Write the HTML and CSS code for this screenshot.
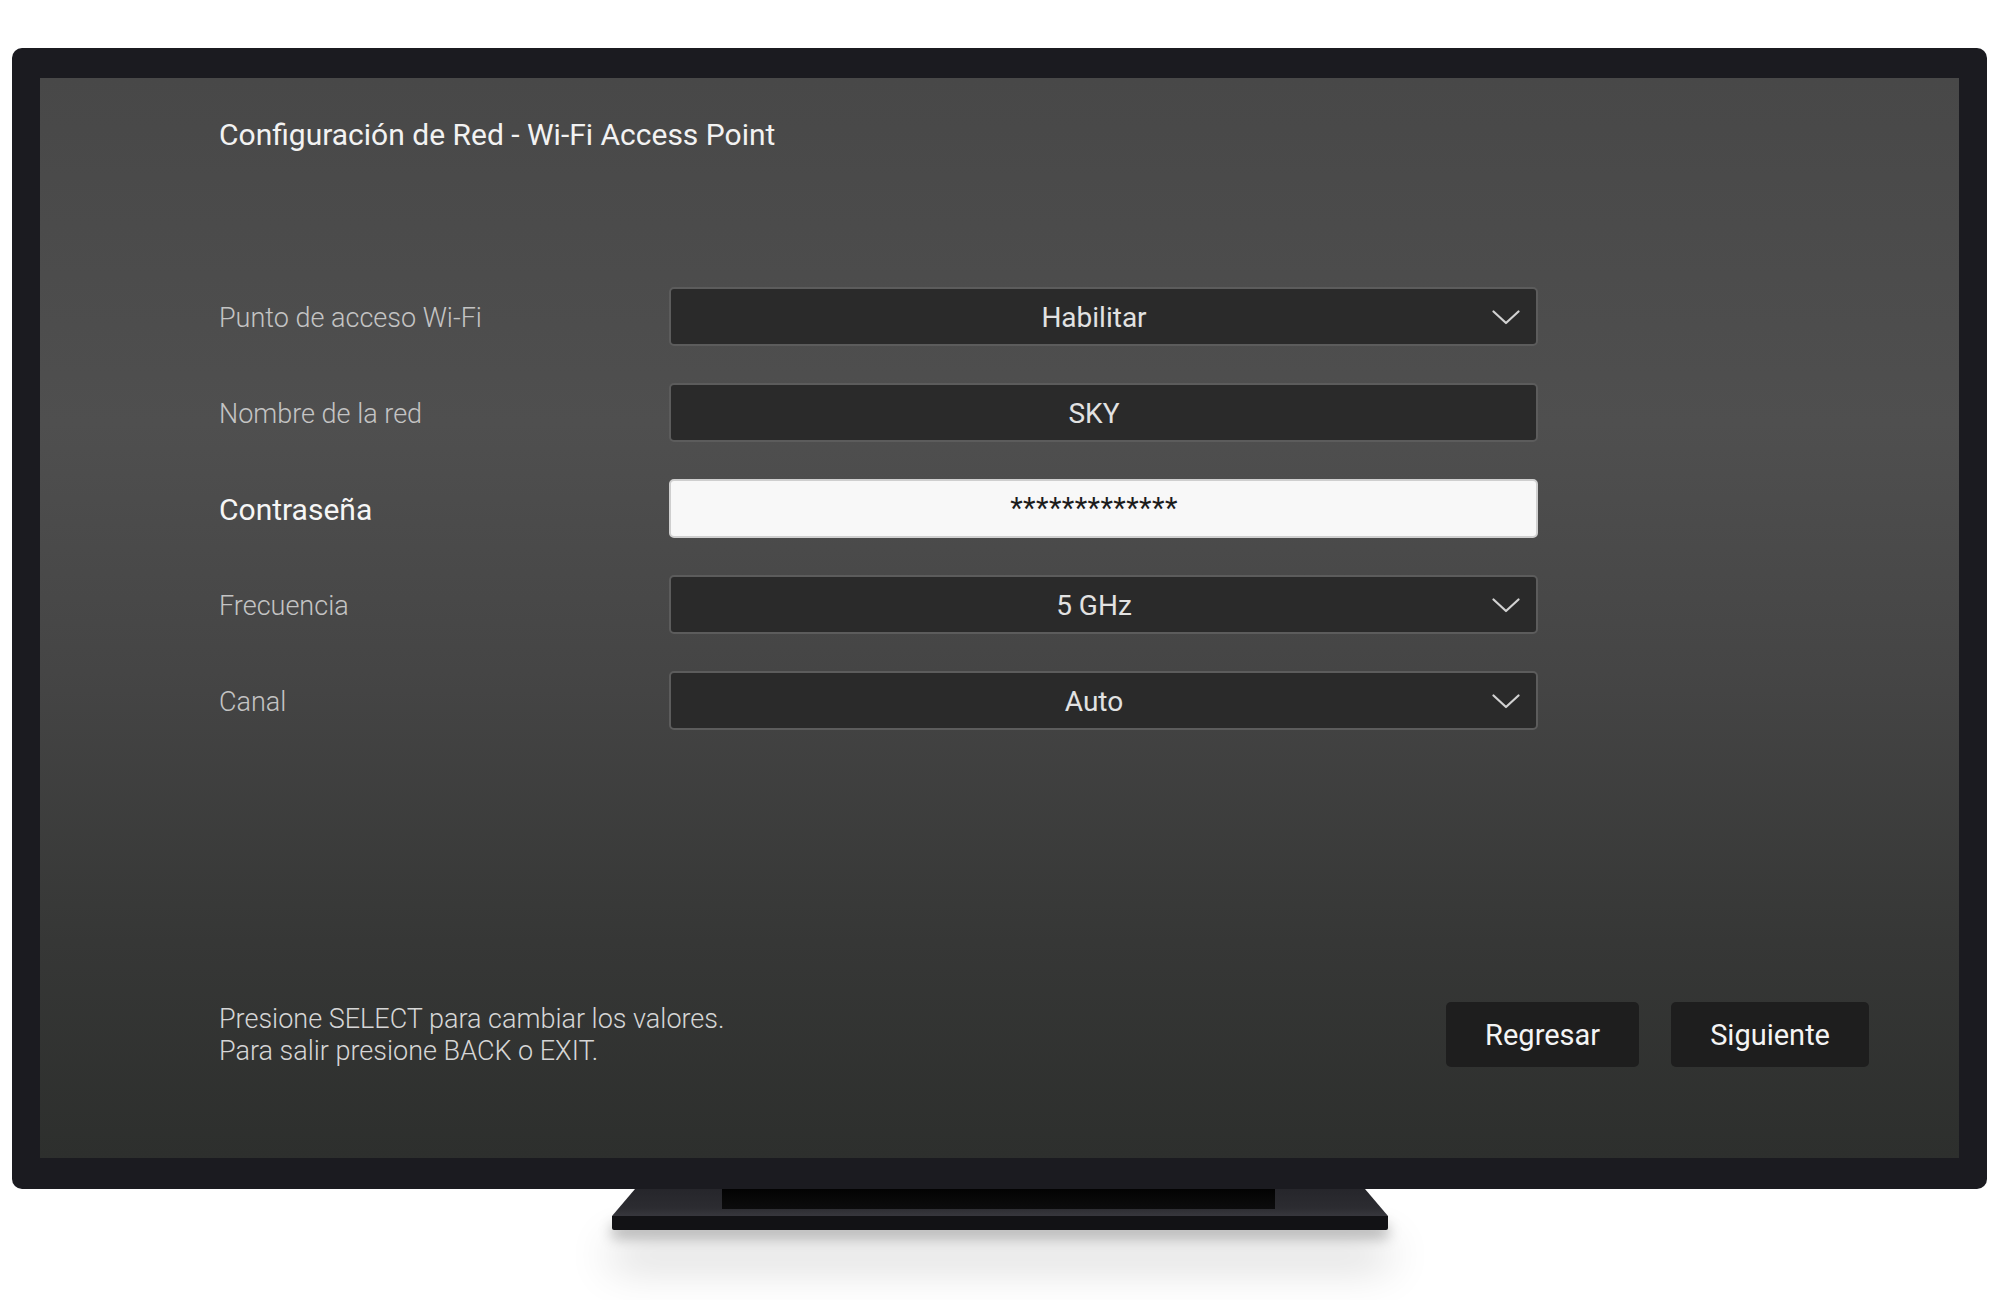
FILE: index.html
```html
<!DOCTYPE html>
<html lang="es">
<head>
<meta charset="utf-8">
<title>Configuración de Red - Wi-Fi Access Point</title>
<link rel="stylesheet" href="styles.css">
</head>
<body>
<div class="scene">
  <div class="tv">
    <div class="screen">
      <h1 class="title">Configuración de Red - Wi-Fi Access Point</h1>

      <div class="form">
        <div class="label">Punto de acceso Wi-Fi</div>
        <div class="field select">
          <span class="value">Habilitar</span>
          <svg class="chev" width="28" height="15" viewBox="0 0 28 15"><path d="M1.5 1.5 L14 13 L26.5 1.5" fill="none" stroke="#d2d2d2" stroke-width="2.2" stroke-linecap="round" stroke-linejoin="round"/></svg>
        </div>

        <div class="label">Nombre de la red</div>
        <div class="field">
          <span class="value">SKY</span>
        </div>

        <div class="label label-active">Contraseña</div>
        <div class="field field-active">
          <span class="value pass">*************</span>
        </div>

        <div class="label">Frecuencia</div>
        <div class="field select">
          <span class="value">5 GHz</span>
          <svg class="chev" width="28" height="15" viewBox="0 0 28 15"><path d="M1.5 1.5 L14 13 L26.5 1.5" fill="none" stroke="#d2d2d2" stroke-width="2.2" stroke-linecap="round" stroke-linejoin="round"/></svg>
        </div>

        <div class="label">Canal</div>
        <div class="field select">
          <span class="value">Auto</span>
          <svg class="chev" width="28" height="15" viewBox="0 0 28 15"><path d="M1.5 1.5 L14 13 L26.5 1.5" fill="none" stroke="#d2d2d2" stroke-width="2.2" stroke-linecap="round" stroke-linejoin="round"/></svg>
        </div>
      </div>

      <div class="footer">
        <p class="hint">Presione SELECT para cambiar los valores.<br>Para salir presione BACK o EXIT.</p>
        <div class="actions">
          <button class="btn">Regresar</button>
          <button class="btn">Siguiente</button>
        </div>
      </div>
    </div>
  </div>

  <div class="stand">
    <div class="neck">
      <div class="neck-slot"></div>
    </div>
    <div class="base"></div>
  </div>
</div>
</body>
</html>
```

FILE: styles.css
```css
html, body {
  margin: 0;
  padding: 0;
  background: #ffffff;
}

body {
  width: 2000px;
  height: 1300px;
  overflow: hidden;
  font-family: Roboto, "Noto Sans", "Liberation Sans", sans-serif;
}

.scene {
  padding-top: 48px;
  padding-left: 12px;
}

/* TV bezel */
.tv {
  width: 1919px;
  padding: 30px 28px 31px 28px;
  background: #1b1b20;
  border-radius: 10px;
}

.screen {
  position: relative;
  width: 1919px;
  height: 1080px;
  box-sizing: border-box;
  padding: 38px 90px 91px 179px;
  display: flex;
  flex-direction: column;
  background: linear-gradient(180deg, #484848 0%, #4f4f4f 32%, #454545 55%, #363736 80%, #2d2f2d 100%);
}

.title {
  margin: 0;
  font-size: 30px;
  line-height: 38px;
  font-weight: 400;
  color: #f2f2f2;
}

/* settings form */
.form {
  margin-top: 133px;
  display: grid;
  grid-template-columns: 450px 869px;
  grid-auto-rows: 59px;
  row-gap: 37px;
}

.label {
  align-self: center;
  margin-top: 3px;
  font-size: 27px;
  font-weight: 300;
  color: #c4c4c4;
  line-height: 32px;
}

.label-active {
  font-size: 30px;
  font-weight: 400;
  color: #f6f6f6;
}

.field {
  position: relative;
  box-sizing: border-box;
  display: flex;
  align-items: center;
  justify-content: center;
  padding-top: 2px;
  padding-right: 19px;
  background: #2a2a2a;
  border: 2px solid #5c5c5c;
  border-radius: 5px;
}

.field-active {
  background: #f8f8f8;
  border-color: #cfcfcf;
}

.value {
  font-size: 28px;
  line-height: 32px;
  color: #e2e2e2;
  font-weight: 400;
}

.pass {
  color: #1c1c1c;
  font-size: 29px;
  letter-spacing: 0.4px;
  margin-top: -3px;
}

.chev {
  position: absolute;
  right: 16px;
  top: 21px;
}

/* footer: hint + buttons */
.footer {
  margin-top: auto;
  display: flex;
  align-items: center;
  justify-content: space-between;
}

.hint {
  margin: 0;
  font-size: 27px;
  font-weight: 300;
  line-height: 32px;
  color: #d6d6d6;
}

.actions {
  display: flex;
  gap: 32px;
}

.btn {
  height: 65px;
  padding: 0 39px;
  border: 0;
  border-radius: 5px;
  background: #1e1e1e;
  color: #f4f4f4;
  font-family: Roboto, "Noto Sans", "Liberation Sans", sans-serif;
  font-size: 29px;
  font-weight: 400;
}

/* stand */
.stand {
  width: 776px;
  margin-left: 600px;
}

.neck {
  height: 27px;
  background: linear-gradient(180deg, #26262b 0%, #2c2c31 70%, #37373d 100%);
  clip-path: polygon(23px 0, 753px 0, 776px 27px, 0 27px);
}

.neck-slot {
  width: 553px;
  height: 20px;
  margin-left: 110px;
  background: linear-gradient(180deg, #030303 0%, #0c0c0d 100%);
}

.base {
  height: 14px;
  background: #121215;
  border-radius: 0 0 2px 2px;
  box-shadow: 0 32px 44px 0 rgba(0, 0, 0, 0.3), 0 8px 14px rgba(0, 0, 0, 0.28);
}
```
